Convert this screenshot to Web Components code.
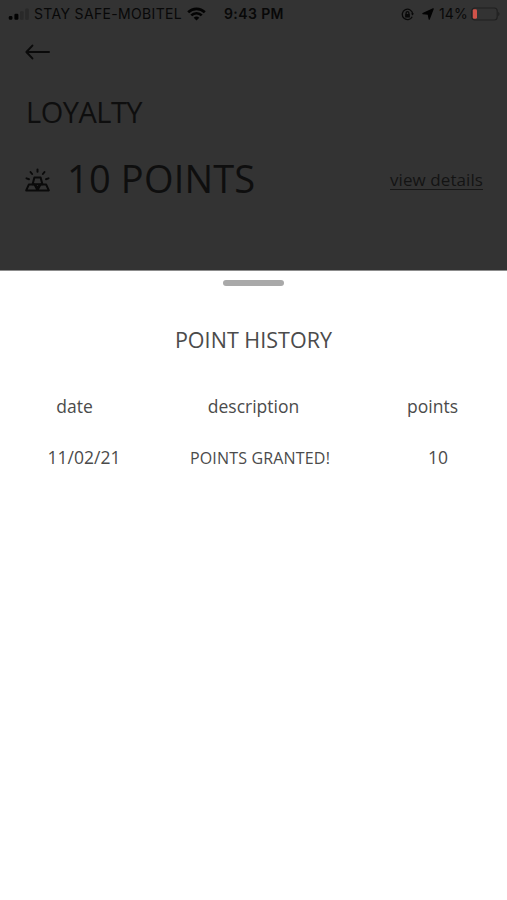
<!DOCTYPE html>
<html lang="en">
<head>
  <meta charset="utf-8">
  <meta name="viewport" content="width=device-width, initial-scale=1">
  <title>Loyalty</title>
  <style>
    body {
      margin: 0;
      font-family: "Open Sans", "Noto Sans", sans-serif;
      background: #fff;
    }
  </style>
</head>
<body>

<loyalty-app>
  <status-bar slot="header" carrier="STAY SAFE-MOBITEL" time="9:43 PM" battery="14"></status-bar>
  <loyalty-summary slot="header" heading="LOYALTY" points="10">view details</loyalty-summary>
  <bottom-sheet heading="POINT HISTORY">
    <point-history></point-history>
  </bottom-sheet>
</loyalty-app>

<script>
  /**
   *
   * LoyaltyApp
   *  - Element: loyalty-app
   *  - Description: Dimmed page with a sheet over its lower part
   *
   */
  class LoyaltyApp extends HTMLElement {

    constructor() {
      super();
      this.attachShadow({mode: 'open'}).innerHTML = `
        <style>
          :host { display: flex; flex-direction: column; height: 900px; overflow: hidden; }
          .dimmed { flex: none; height: 270px; background: #333; color: #0e0e0e; }
          .sheet { flex: 1; display: flex; }
        </style>
        <div class="dimmed"><slot name="header"></slot></div>
        <div class="sheet"><slot></slot></div>
      `;
    }

  }

  customElements.define('loyalty-app', LoyaltyApp);

  /**
   *
   * StatusBar
   *  - Element: status-bar
   *  - Description: Phone status bar
   *
   */
  class StatusBar extends HTMLElement {

    connectedCallback() {
      const battery = Number(this.getAttribute('battery'));

      this.attachShadow({mode: 'open'}).innerHTML = `
        <style>
          :host {
            display: grid; grid-template-columns: 224px auto 1fr; align-items: center;
            box-sizing: border-box; height: 28px; padding: 0 7px 0 0;
            font: 14px/28px Inter, "Liberation Sans", sans-serif; color: #080808; white-space: nowrap;
          }
          svg { display: block; flex: none; }
          .network, .indicators { display: flex; align-items: center; }
          .network { padding-left: 8px; }
          .carrier { width: 147px; margin: 0 6px 0 5px; letter-spacing: 0.34px; }
          .time { font-weight: 600; letter-spacing: 0.4px; }
          .indicators { justify-content: flex-end; }
          .lock { margin-right: 8px; }
          .location { margin-right: 5px; }
          .percent { width: 29px; margin-right: 3px; letter-spacing: 0.1px; }
        </style>
        <div class="network">
          <svg width="21" height="12" viewBox="0 0 21 12">
            <rect x="0.8" y="8" width="3.6" height="3.8" rx="1.2" fill="#030303"/>
            <rect x="6.4" y="5.8" width="4" height="6" rx="1.2" fill="#030303"/>
            <rect x="12" y="3.2" width="3.6" height="8.6" rx="1" fill="#292929"/>
            <rect x="17.2" y="0.5" width="3.6" height="11.3" rx="1" fill="#292929"/>
          </svg>
          <span class="carrier">${this.getAttribute('carrier')}</span>
          <svg width="19" height="14" viewBox="0 0 19 14" fill="none" stroke="#030303" stroke-width="2.7">
            <path d="M1.2 5.2a11.8 11.8 0 0 1 16.6 0"/>
            <path d="M4.3 8.4a7.4 7.4 0 0 1 10.4 0"/>
            <path d="M9.5 13.6 6.7 10.8a4 4 0 0 1 5.6 0z" fill="#030303" stroke="none"/>
          </svg>
        </div>
        <span class="time">${this.getAttribute('time')}</span>
        <div class="indicators">
          <svg class="lock" width="13" height="13" viewBox="0 0 13 13" fill="none" stroke="#090909" stroke-width="1.3">
            <path d="M11.2 8.7A5.2 5.2 0 1 1 11.7 6.1"/>
            <path d="M9.9 5.4h3.1l-1.5 2.2z" fill="#090909" stroke="none"/>
            <rect x="4.1" y="6" width="4.8" height="3.4" rx="0.5" fill="#090909" stroke="none"/>
            <path d="M5.1 6.2V5a1.4 1.4 0 0 1 2.8 0v1.2"/>
          </svg>
          <svg class="location" width="12" height="12" viewBox="0 0 12 12">
            <path d="M11.2 0.8 7.2 11.2 6.2 6.2 0.9 5.6z" fill="#030303" stroke="#030303" stroke-width="1.2" stroke-linejoin="round"/>
          </svg>
          <span class="percent">${battery}%</span>
          <svg width="29" height="14" viewBox="0 0 29 14">
            <rect x="0.8" y="1" width="25.4" height="12" rx="3" fill="none" stroke="#202020" stroke-width="1.2"/>
            <rect x="1.8" y="2.2" width="${battery * 0.3}" height="9.6" rx="1.4" fill="#d2534a"/>
            <path d="M27.2 4.8v4.4c1.8-.7 1.8-3.7 0-4.4z" fill="#202020"/>
          </svg>
        </div>
      `;
    }

  }

  customElements.define('status-bar', StatusBar);

  /**
   *
   * LoyaltySummary
   *  - Element: loyalty-summary
   *  - Description: Back arrow, page title and points balance
   *
   */
  class LoyaltySummary extends HTMLElement {

    connectedCallback() {
      this.attachShadow({mode: 'open'}).innerHTML = `
        <style>
          :host { display: block; padding: 0 24px 0 25px; }
          svg { display: block; flex: none; }
          nav { display: flex; align-items: center; height: 48px; }
          h1 { margin: 16px 0 0 1px; font-size: 29px; font-weight: 400; line-height: 40px; letter-spacing: -0.5px; }
          .balance { display: flex; align-items: center; height: 56px; margin-top: 18px; }
          .balance svg { margin: 3px 17px 0 0; }
          .total { flex: 1; font-size: 38px; line-height: 56px; letter-spacing: 0.18px; white-space: nowrap; }
          .details { margin-top: 4px; font-size: 17px; line-height: 19px; letter-spacing: 0.08px; border-bottom: 1px solid #171717; color: #131313; }
        </style>
        <nav>
          <svg width="26" height="16" viewBox="0 0 26 16" fill="none" stroke="#0a0a0a" stroke-width="2" stroke-linecap="round" stroke-linejoin="round">
            <path d="M24 8H1.5M7.4 1.6 1.4 8l6 6.4"/>
          </svg>
        </nav>
        <h1>${this.getAttribute('heading')}</h1>
        <div class="balance">
          <svg width="25" height="24" viewBox="0 0 25 24" fill="none" stroke="#0a0a0a" stroke-width="2" stroke-linecap="round" stroke-linejoin="round">
            <path d="M1.2 22.4 3.8 16.6h5.8l2.9 5.8zM12.5 22.4l2.9-5.8h5.8l2.6 5.8z"/>
            <path d="M7.6 16.2 9.4 9.4h6.2l1.8 6.8zM10.4 17l2.1 3.4 2.1-3.4"/>
            <path d="M12.5 1.6v2.2M5.5 4l1.6 2M19.5 4l-1.6 2M1.5 10.4l2.5.8M23.5 10.4l-2.5.8"/>
          </svg>
          <span class="total">${this.getAttribute('points')} POINTS</span>
          <span class="details"><slot></slot></span>
        </div>
      `;
    }

  }

  customElements.define('loyalty-summary', LoyaltySummary);

  /**
   *
   * BottomSheet
   *  - Element: bottom-sheet
   *  - Description: White sheet with a drag handle
   *
   */
  class BottomSheet extends HTMLElement {

    connectedCallback() {
      this.attachShadow({mode: 'open'}).innerHTML = `
        <style>
          :host { display: flex; flex: 1; flex-direction: column; border-top: 1px solid #8c8c8c; background: #fff; color: #4b4b4b; }
          .handle { width: 61px; height: 6px; margin: 9px auto 0; border-radius: 3px; background: #a9a9a9; }
          h2 { margin: 38px 0 0; font-size: 21.5px; font-weight: 400; line-height: 32px; text-align: center; letter-spacing: 0.03px; }
        </style>
        <div class="handle"></div>
        <h2>${this.getAttribute('heading')}</h2>
        <slot></slot>
      `;
    }

  }

  customElements.define('bottom-sheet', BottomSheet);

  /**
   *
   * PointHistory
   *  - Element: point-history
   *  - Description: List of point transactions
   *
   */
  class PointHistory extends HTMLElement {

    /**
     * @type {{date:string, description:string, points:number}[]}
     */
    entries = [
      {date: '11/02/21', description: 'POINTS GRANTED!', points: 10}
    ];

    connectedCallback() {
      const rows = this.entries.map(({date, description, points}) => `
        <div class="row entry">
          <span class="date">${date}</span>
          <span class="description">${description}</span>
          <span class="points">${points}</span>
        </div>
      `).join('');

      this.attachShadow({mode: 'open'}).innerHTML = `
        <style>
          :host { display: block; margin-top: 37px; font-size: 17.5px; line-height: 26px; }
          .row { display: grid; grid-template-columns: 149px 209px 149px; align-items: baseline; text-align: center; white-space: nowrap; }
          .entry { margin-top: 25px; }
          .entry .date { padding-left: 19px; }
          .entry .description { padding-left: 13px; font-size: 16px; letter-spacing: 0.17px; }
          .entry .points { padding-left: 11px; }
        </style>
        <div class="row">
          <span>date</span>
          <span>description</span>
          <span>points</span>
        </div>
        ${rows}
      `;
    }

  }

  customElements.define('point-history', PointHistory);
</script>
</body>
</html>
